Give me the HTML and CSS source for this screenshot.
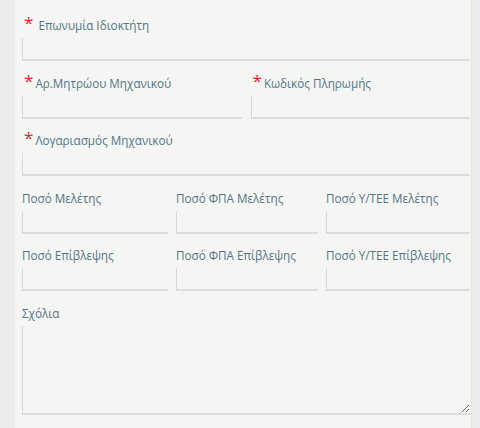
FILE: index.html
```html
<!DOCTYPE html>
<html lang="el">
<head>
<meta charset="utf-8">
<title>Φόρμα</title>
<link rel="stylesheet" href="styles.css">
</head>
<body>
<div class="page">
  <form class="panel">
    <div class="field">
      <label class="label"><span class="req">*</span> Επωνυμία Ιδιοκτήτη</label>
      <input class="input" type="text">
    </div>
    <div class="row two">
      <div class="field">
        <label class="label"><span class="req">*</span>Αρ.Μητρώου Μηχανικού</label>
        <input class="input" type="text">
      </div>
      <div class="field">
        <label class="label"><span class="req">*</span>Κωδικός Πληρωμής</label>
        <input class="input" type="text">
      </div>
    </div>
    <div class="field">
      <label class="label"><span class="req">*</span>Λογαριασμός Μηχανικού</label>
      <input class="input" type="text">
    </div>
    <div class="row three">
      <div class="field">
        <label class="label">Ποσό Μελέτης</label>
        <input class="input" type="text">
      </div>
      <div class="field">
        <label class="label">Ποσό ΦΠΑ Μελέτης</label>
        <input class="input" type="text">
      </div>
      <div class="field">
        <label class="label">Ποσό Υ/ΤΕΕ Μελέτης</label>
        <input class="input" type="text">
      </div>
    </div>
    <div class="row three">
      <div class="field">
        <label class="label">Ποσό Επίβλεψης</label>
        <input class="input" type="text">
      </div>
      <div class="field">
        <label class="label">Ποσό ΦΠΑ Επίβλεψης</label>
        <input class="input" type="text">
      </div>
      <div class="field">
        <label class="label">Ποσό Υ/ΤΕΕ Επίβλεψης</label>
        <input class="input" type="text">
      </div>
    </div>
    <div class="field">
      <label class="label">Σχόλια</label>
      <textarea class="input textarea"></textarea>
    </div>
  </form>
</div>
</body>
</html>
```

FILE: styles.css
```css
html, body {
  margin: 0;
  padding: 0;
  height: 100%;
}
body {
  background: #ececec;
  font-family: "Open Sans", "Noto Sans", sans-serif;
  font-size: 11.7px;
  color: #527585;
}
.page {
  display: flex;
  height: 100%;
}
.panel {
  margin-left: 15px;
  width: 457px;
  box-sizing: border-box;
  background: #f5f5f3;
  border-right: 1px solid #e6e6e6;
  padding: 16px 1px 0 7px;
}
.field {
  display: flex;
  flex-direction: column;
  margin-bottom: 12.6px;
}
.row {
  display: grid;
}
.row .field {
  min-width: 0;
}
.two {
  grid-template-columns: 1fr 1fr;
  column-gap: 9px;
}
.three {
  grid-template-columns: 146px 142px 1fr;
  column-gap: 8px;
}
.label {
  line-height: 18px;
  margin-bottom: 4px;
  white-space: nowrap;
}
.req {
  color: #d6262c;
  font-size: 17px;
  line-height: 0;
  position: relative;
  top: -1px;
  margin-left: 2px;
  margin-right: 2px;
}
.input {
  display: block;
  box-sizing: border-box;
  width: 100%;
  height: 23px;
  margin: 0;
  padding: 2px 6px;
  background: #f5f5f3;
  border: 0;
  border-left: 1px solid #d8d8d6;
  border-bottom: 2px solid #dcdcda;
  font: inherit;
  outline: none;
}
.textarea {
  height: 89px;
  resize: vertical;
}
```
